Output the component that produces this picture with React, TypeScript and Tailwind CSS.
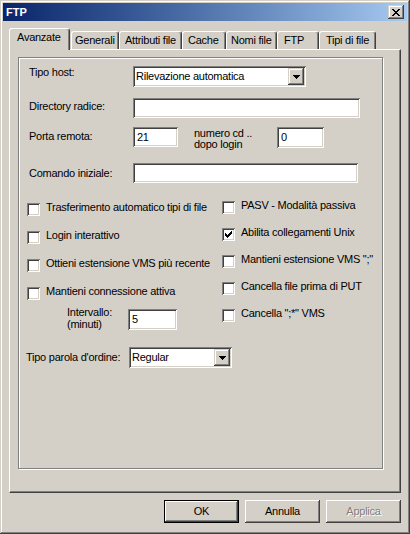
import React from "react";

const FONT = "font-['Liberation_Sans',Arial,sans-serif]";
const RAISED_BTN =
  "shadow-[inset_-1px_-1px_#404040,inset_1px_1px_#ffffff,inset_-2px_-2px_#808080,inset_2px_2px_#d4d0c8]";
const RAISED_SMALL =
  "shadow-[inset_-1px_-1px_#404040,inset_1px_1px_#d4d0c8,inset_-2px_-2px_#808080,inset_2px_2px_#ffffff]";
const SUNKEN =
  "shadow-[inset_1px_1px_#808080,inset_-1px_-1px_#ffffff,inset_2px_2px_#404040,inset_-2px_-2px_#d4d0c8]";

function Pixels({ rows, color = "#000" }: { rows: string[]; color?: string }) {
  const w = rows[0].length;
  const h = rows.length;
  const rects: React.ReactNode[] = [];
  rows.forEach((r, y) =>
    r.split("").forEach((c, x) => {
      if (c === "X") rects.push(<rect key={`${x}-${y}`} x={x} y={y} width={1} height={1} fill={color} />);
    })
  );
  return (
    <svg width={w} height={h} viewBox={`0 0 ${w} ${h}`} shapeRendering="crispEdges" className="block">
      {rects}
    </svg>
  );
}

const X_GLYPH = ["XX....XX", ".XX..XX.", "..XXXX..", "...XX...", "..XXXX..", ".XX..XX.", "XX....XX"];
const ARROW = ["XXXXXXX", ".XXXXX.", "..XXX..", "...X..."];
const CHECK = ["......X", ".....XX", "X...XXX", "XX.XXX.", "XXXXX..", ".XXX...", "..X...."];

function Edit({ w, h, value }: { w: string; h: string; value?: string }) {
  return (
    <div className={`${w} ${h} bg-white ${SUNKEN} flex items-center pl-[4px] shrink-0`}>
      <span className="leading-[13px]">{value}</span>
    </div>
  );
}

function Combo({ w, value }: { w: string; value: string }) {
  return (
    <div className={`${w} h-[21px] bg-white ${SUNKEN} flex items-center pl-[3px] pr-[2px] shrink-0`}>
      <span className="leading-[13px] flex-1">{value}</span>
      <div className={`w-[16px] h-[17px] bg-[#d4d0c8] ${RAISED_SMALL} flex items-center justify-center`}>
        <Pixels rows={ARROW} />
      </div>
    </div>
  );
}

function Check({ label, checked, className = "" }: { label: string; checked?: boolean; className?: string }) {
  return (
    <div className={`flex items-start ${className}`}>
      <div className={`w-[13px] h-[13px] bg-white ${SUNKEN} flex items-center justify-center shrink-0`}>
        {checked && <Pixels rows={CHECK} />}
      </div>
      <span className="ml-[6px] leading-[13px] -mt-[2px] whitespace-nowrap">{label}</span>
    </div>
  );
}

function Tab({ label, w, pl, selected }: { label: string; w: string; pl: string; selected?: boolean }) {
  return (
    <div
      className={`${w} ${pl} ${
        selected ? "h-[22px] -mb-px relative z-10" : "h-[18px]"
      } bg-[#d4d0c8] border-l border-t border-r border-l-white border-t-white border-r-[#404040] shadow-[inset_-1px_0_#808080] rounded-t-[3px] pt-[2px] leading-[13px] whitespace-nowrap shrink-0`}
    >
      {label}
    </div>
  );
}

function Button({ label, def, disabled }: { label: string; def?: boolean; disabled?: boolean }) {
  const inner = (
    <div
      className={`w-full h-full ${RAISED_BTN} flex items-center justify-center leading-[13px] ${
        disabled ? "text-[#808080] [text-shadow:1px_1px_0_#ffffff]" : ""
      }`}
    >
      {label}
    </div>
  );
  if (def)
    return <div className="w-[75px] h-[23px] border border-black bg-[#d4d0c8]">{inner}</div>;
  return <div className="w-[75px] h-[23px] bg-[#d4d0c8]">{inner}</div>;
}

export default function App() {
  return (
    <div
      className={`w-[410px] h-[534px] bg-[#d4d0c8] p-[3px] text-[11px] tracking-[-0.25px] text-black ${FONT} shadow-[inset_-1px_-1px_#404040,inset_1px_1px_#d4d0c8,inset_-2px_-2px_#808080,inset_2px_2px_#ffffff] flex flex-col`}
    >
      {/* Title bar */}
      <div className="h-[18px] flex items-center justify-between bg-linear-to-r from-[#0a246a] to-[#a6caf0] pl-[3px] pr-[3px] shrink-0">
        <span className="font-bold text-white leading-[13px] tracking-normal">FTP</span>
        <div className={`w-[16px] h-[14px] bg-[#d4d0c8] ${RAISED_SMALL} flex items-center justify-center`}>
          <Pixels rows={X_GLYPH} />
        </div>
      </div>

      {/* Tabs + panel */}
      <div className="ml-[6px] mt-[7px] w-[392px] flex flex-col">
        <div className="h-[21px] flex items-end">
          <Tab label="Avanzate" w="w-[61px]" pl="pl-[7px]" selected />
          <div className="w-[1px] shrink-0" />
          <Tab label="Generali" w="w-[48px]" pl="pl-[3px]" />
          <Tab label="Attributi file" w="w-[63px]" pl="pl-[5px]" />
          <Tab label="Cache" w="w-[44px]" pl="pl-[5px]" />
          <Tab label="Nomi file" w="w-[51px]" pl="pl-[4px]" />
          <Tab label="FTP" w="w-[42px]" pl="pl-[6px]" />
          <Tab label="Tipi di file" w="w-[57px]" pl="pl-[6px]" />
        </div>

        <div className="h-[444px] border-t border-l border-r border-b border-t-white border-l-white border-r-[#404040] border-b-[#404040] shadow-[inset_-1px_-1px_#808080] flex flex-col">
          {/* Group box */}
          <div className="ml-[8px] mt-[7px] w-[365px] h-[412px] border border-[#808080] shadow-[1px_1px_0_#ffffff,inset_1px_1px_0_#ffffff] flex flex-col">
            {/* Row 1 */}
            <div className="mt-[8px] flex items-start">
              <span className="ml-[10px] w-[104px] leading-[13px]">Tipo host:</span>
              <Combo w="w-[173px]" value="Rilevazione automatica" />
            </div>
            {/* Row 2 */}
            <div className="mt-[11px] flex items-start">
              <span className="ml-[10px] w-[104px] mt-[2px] leading-[13px]">Directory radice:</span>
              <Edit w="w-[227px]" h="h-[20px]" />
            </div>
            {/* Row 3 */}
            <div className="mt-[9px] h-[21px] flex items-start">
              <span className="ml-[10px] w-[104px] mt-[3px] leading-[13px]">Porta remota:</span>
              <Edit w="w-[45px]" h="h-[20px]" value="21" />
              <span className="ml-[16px] w-[83px] mt-px leading-[11px]">
                numero cd ..
                <br />
                dopo login
              </span>
              <Edit w="w-[47px]" h="h-[21px]" value="0" />
            </div>
            {/* Row 4 */}
            <div className="mt-[15px] flex items-start">
              <span className="ml-[10px] w-[104px] mt-[4px] leading-[13px]">Comando iniziale:</span>
              <Edit w="w-[225px]" h="h-[20px]" />
            </div>

            {/* Checkbox section */}
            <div className="flex items-start">
              <div className="ml-[8px] w-[195px] pt-[20px] flex flex-col">
                <Check label="Trasferimento automatico tipi di file" />
                <Check label="Login interattivo" className="mt-[15px]" />
                <Check label="Ottieni estensione VMS più recente" className="mt-[15px]" />
                <Check label="Mantieni connessione attiva" className="mt-[15px]" />
                <div className="mt-[6px] flex items-start">
                  <span className="ml-[40px] w-[61px] leading-[12px]">
                    Intervallo:
                    <br />
                    (minuti)
                  </span>
                  <div className="mt-[3px]">
                    <Edit w="w-[49px]" h="h-[21px]" value="5" />
                  </div>
                </div>
              </div>
              <div className="pt-[18px] flex flex-col">
                <Check label="PASV - Modalità passiva" />
                <Check label="Abilita collegamenti Unix" checked className="mt-[14px]" />
                <Check label={'Mantieni estensione VMS ";"'} className="mt-[14px]" />
                <Check label="Cancella file prima di PUT" className="mt-[14px]" />
                <Check label={'Cancella ";*" VMS'} className="mt-[14px]" />
              </div>
            </div>

            {/* Tipo parola */}
            <div className="mt-[17px] flex items-start">
              <span className="ml-[7px] w-[103px] mt-[4px] leading-[13px]">Tipo parola d'ordine:</span>
              <Combo w="w-[103px]" value="Regular" />
            </div>
          </div>
        </div>
      </div>

      {/* Buttons */}
      <div className="ml-[6px] mt-[7px] w-[392px] flex justify-end gap-[6px]">
        <Button label="OK" def />
        <Button label="Annulla" />
        <Button label="Applica" disabled />
      </div>
    </div>
  );
}
